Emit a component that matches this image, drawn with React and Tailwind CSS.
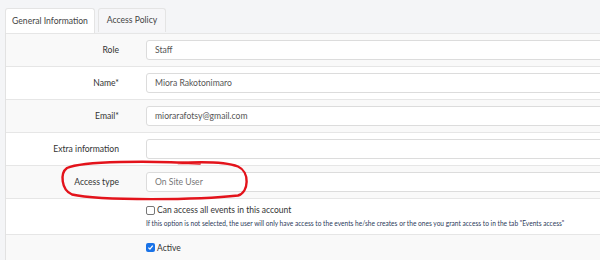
import React from 'react';

const font = { fontFamily: 'Lato, "Open Sans", sans-serif' };

const rows = [
  { label: 'Role', value: 'Staff' },
  { label: 'Name*', value: 'Miora Rakotonimaro' },
  { label: 'Email*', value: 'miorarafotsy@gmail.com' },
  { label: 'Extra information', value: '' },
  { label: 'Access type', value: 'On Site User', muted: true },
];

const Row = ({ label, value, muted, striped }) => (
  <div className={`flex h-[33px] items-center border-t border-[#e6e6e6] ${striped ? 'bg-[#f9f9f9]' : 'bg-white'}`}>
    <div className="w-[113px] shrink-0 text-right text-[8.6px] text-[#333]">{label}</div>
    <div className="ml-[27px] -mr-4 flex h-[20px] flex-1 items-center rounded-[3px] border border-[#dcdcdc] bg-white px-[8px]">
      <span className={`text-[8.6px] ${muted ? 'text-[#777]' : 'text-[#555]'}`}>{value}</span>
    </div>
  </div>
);

export default function App() {
  return (
    <div className="relative h-[260px] w-[600px] overflow-hidden bg-[#f4f5f7] pl-[5px] pt-[8px]" style={font}>
      <div className="flex gap-[3px]">
        <div className="flex h-[25px] w-[90px] items-center justify-center whitespace-nowrap rounded-t-[3px] border border-b-0 border-[#e4e4e4] bg-white text-[8.6px] text-[#444]">
          General Information
        </div>
        <div className="flex h-[24px] w-[68px] items-center justify-center whitespace-nowrap rounded-t-[3px] border border-b-0 border-[#e4e4e4] bg-[#f6f6f8] text-[8.6px] text-[#444]">
          Access Policy
        </div>
      </div>
      <div className="border-l border-[#e2e2e2] bg-white">
        {rows.map((r, i) => (
          <Row key={r.label} {...r} striped={i % 2 === 0} />
        ))}
        <div className="flex h-[36px] flex-col border-t border-[#e6e6e6] bg-white pl-[140px] pt-[5px]">
          <div className="flex items-center gap-[2px]">
            <span className="inline-block h-[9px] w-[9px] rounded-[2px] border border-[#777] bg-white" />
            <span className="text-[8.5px] text-[#333]">Can access all events in this account</span>
          </div>
          <div className="mt-[2px] whitespace-nowrap text-[6.6px] text-[#2c3a5a]">
            If this option is not selected, the user will only have access to the events he/she creates or the ones you grant access to in the tab "Events access"
          </div>
        </div>
        <div className="flex h-[33px] items-start border-t border-[#e6e6e6] bg-[#f9f9f9] pl-[140px] pt-[8px]">
          <span className="flex h-[9px] w-[9px] items-center justify-center rounded-[2px] bg-[#1a73e8]">
            <svg width="7" height="7" viewBox="0 0 10 10">
              <path d="M2 5.2 L4.2 7.4 L8.2 2.4" fill="none" stroke="white" strokeWidth="1.8" />
            </svg>
          </span>
          <span className="ml-[2px] -mt-[1px] text-[8.5px] text-[#333]">Active</span>
        </div>
      </div>
      <svg className="pointer-events-none absolute left-0 top-0" width="600" height="260">
        <path
          d="M200 163.5 C150 160.5 82 161 67 168 C60 173 61 190 72 194.5 C100 201 200 200 238 195.5 C249 192 250 172 238 166.5 C226 162 205 161.5 178 163"
          fill="none"
          stroke="#e3131b"
          strokeWidth="2.4"
          strokeLinecap="round"
        />
      </svg>
    </div>
  );
}
